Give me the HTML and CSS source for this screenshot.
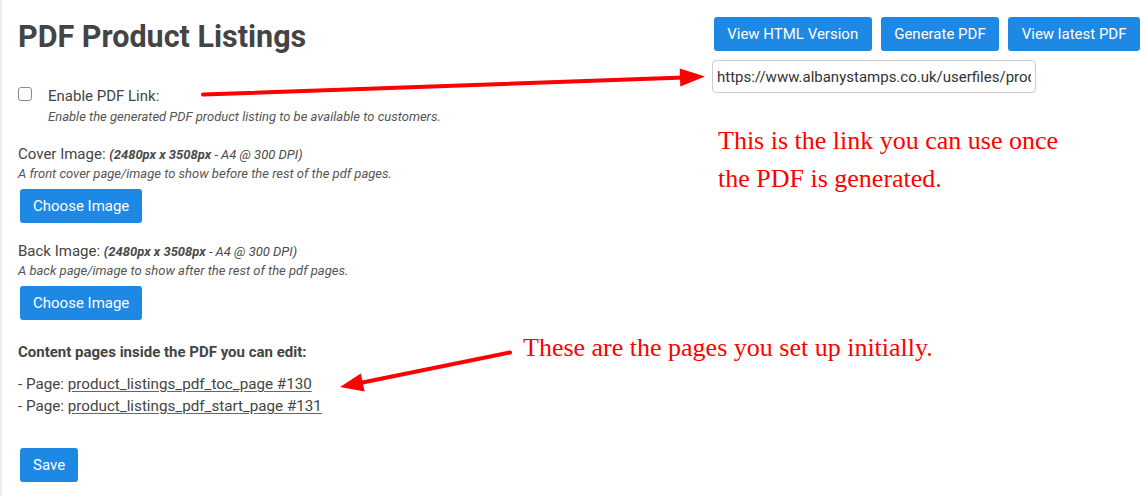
FILE: index.html
```html
<!DOCTYPE html>
<html lang="en">
<head>
<meta charset="utf-8">
<title>PDF Product Listings</title>
<link rel="stylesheet" href="styles.css">
</head>
<body>
<div class="page">
  <div class="main">
    <h1 class="title">PDF Product Listings</h1>

    <div class="check-field">
      <label class="check-row"><input type="checkbox" class="checkbox"><span class="check-label">Enable PDF Link:</span></label>
      <p class="help indent">Enable the generated PDF product listing to be available to customers.</p>
    </div>

    <div class="image-field">
      <div class="label">Cover Image: <span class="dims"><b>(2480px x 3508px</b> - A4 @ 300 DPI)</span></div>
      <p class="help">A front cover page/image to show before the rest of the pdf pages.</p>
      <button class="btn btn-block" type="button">Choose Image</button>
    </div>

    <div class="image-field back">
      <div class="label">Back Image: <span class="dims"><b>(2480px x 3508px</b> - A4 @ 300 DPI)</span></div>
      <p class="help">A back page/image to show after the rest of the pdf pages.</p>
      <button class="btn btn-block" type="button">Choose Image</button>
    </div>

    <div class="content-pages">
      <div class="content-title">Content pages inside the PDF you can edit:</div>
      <ul class="page-list">
        <li>- Page: <a href="#" class="page-link">product_listings_pdf_toc_page #130</a></li>
        <li>- Page: <a href="#" class="page-link">product_listings_pdf_start_page #131</a></li>
      </ul>
    </div>

    <button class="btn btn-block save" type="button">Save</button>
  </div>

  <div class="side">
    <div class="actions">
      <button class="btn" type="button">View HTML Version</button>
      <button class="btn" type="button">Generate PDF</button>
      <button class="btn" type="button">View latest PDF</button>
    </div>
    <input class="url" type="text" value="https://www.albanystamps.co.uk/userfiles/product_listings.pdf" readonly>
    <p class="note">This is the link you can use once<br>the PDF is generated.</p>
  </div>

  <p class="note note-pages">These are the pages you set up initially.</p>

  <svg class="arrows" width="1146" height="496" viewBox="0 0 1146 496" aria-hidden="true">
    <line x1="203" y1="94.5" x2="684" y2="77.5" stroke="#ff0000" stroke-width="4" stroke-linecap="round"/>
    <polygon points="705,76.5 680.3,86.5 679.7,68.5" fill="#ff0000"/>
    <line x1="510" y1="352.5" x2="360" y2="383" stroke="#ff0000" stroke-width="4" stroke-linecap="round"/>
    <polygon points="340,387 364.6,391.6 360.8,373.6" fill="#ff0000"/>
  </svg>
</div>
</body>
</html>
```

FILE: styles.css
```css
* {
  box-sizing: border-box;
}

html, body {
  margin: 0;
  padding: 0;
  background: #ffffff;
}

body {
  font-family: Roboto, "Liberation Sans", Arial, sans-serif;
  color: #444444;
  width: 1146px;
  height: 496px;
  overflow: hidden;
}

.page {
  position: relative;
  display: flex;
  justify-content: space-between;
  align-items: flex-start;
  height: 496px;
  border-left: 2px solid #ececec;
  padding: 0 6px 0 16px;
}

.main {
  display: flex;
  flex-direction: column;
  align-items: flex-start;
  padding-top: 19px;
}

.title {
  margin: 0;
  font-size: 30.5px;
  line-height: 36px;
  font-weight: 700;
  color: #444444;
}

.check-field {
  margin-top: 31px;
}

.check-row {
  display: flex;
  align-items: flex-start;
  font-size: 15px;
  line-height: 20px;
}

.checkbox {
  appearance: none;
  -webkit-appearance: none;
  width: 14px;
  height: 14px;
  margin: 1px 16px 0 0;
  border: 1px solid #8a8a8a;
  border-radius: 3px;
  background: #ffffff;
}

.check-label {
  color: #444444;
}

.help {
  margin: 2px 0 0;
  font-size: 13px;
  line-height: 16px;
  font-style: italic;
  color: #555555;
}

.help.indent {
  margin-top: 3px;
  padding-left: 30px;
}

.image-field {
  display: flex;
  flex-direction: column;
  align-items: flex-start;
  margin-top: 19px;
}

.image-field.back {
  margin-top: 18px;
}

.label {
  font-size: 15px;
  line-height: 20px;
  color: #444444;
}

.dims {
  font-size: 13px;
  line-height: 1;
  font-style: italic;
  color: #4a4a4a;
}

.dims b {
  font-weight: 700;
}

.btn {
  display: inline-flex;
  align-items: center;
  justify-content: center;
  height: 34px;
  padding: 0 13px;
  border: none;
  border-radius: 3px;
  background: #1e88e5;
  color: #ffffff;
  font-family: Roboto, "Liberation Sans", Arial, sans-serif;
  font-size: 15px;
  line-height: 20px;
  white-space: nowrap;
  cursor: pointer;
}

.btn-block {
  margin-top: 7px;
  margin-left: 2px;
}

.content-pages {
  margin-top: 22px;
}

.content-title {
  font-size: 15px;
  line-height: 20px;
  font-weight: 700;
  color: #444444;
}

.page-list {
  list-style: none;
  margin: 11px 0 0;
  padding: 0;
  font-size: 15.2px;
  line-height: 22px;
}

.page-link {
  color: #444444;
  text-decoration: underline;
  text-underline-offset: 2px;
  text-decoration-color: #666666;
}

.save {
  margin-top: 31px;
}

.side {
  display: flex;
  flex-direction: column;
  align-items: flex-start;
  width: 428px;
  padding-top: 17px;
}

.actions {
  display: flex;
  justify-content: flex-end;
  gap: 9px;
  width: 100%;
}

.actions .btn {
  padding: 0 13.5px;
}

.url {
  width: 324px;
  height: 33px;
  margin-top: 9px;
  padding: 0 4px;
  border: 1px solid #cccccc;
  border-radius: 4px;
  font-family: Roboto, "Liberation Sans", Arial, sans-serif;
  font-size: 15px;
  color: #333333;
  background: #ffffff;
  outline: none;
}

.note {
  margin: 29px 0 0;
  padding-left: 6px;
  font-family: "Liberation Serif", "Times New Roman", serif;
  font-size: 26px;
  line-height: 38px;
  color: #ff0000;
}

.note-pages {
  position: absolute;
  left: 521px;
  top: 329px;
  margin: 0;
  padding: 0;
  white-space: nowrap;
}

.arrows {
  position: absolute;
  left: -2px;
  top: 0;
  pointer-events: none;
}
```
